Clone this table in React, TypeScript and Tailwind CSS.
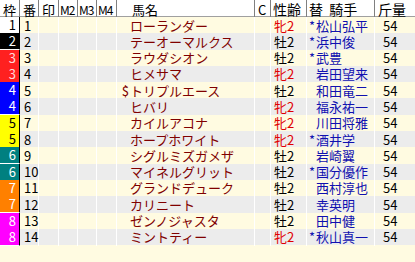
import React from "react";

type Row = { waku: number; uma: number; name: string; dollar?: boolean; sei: string; mark?: boolean; jockey: string; kin: number };

const rows: Row[] = [
  { waku: 1, uma: 1, name: "ローランダー", sei: "牝2", mark: true, jockey: "松山弘平", kin: 54 },
  { waku: 2, uma: 2, name: "テーオーマルクス", sei: "牡2", mark: true, jockey: "浜中俊", kin: 54 },
  { waku: 3, uma: 3, name: "ラウダシオン", sei: "牡2", mark: true, jockey: "武豊", kin: 54 },
  { waku: 3, uma: 4, name: "ヒメサマ", sei: "牝2", jockey: "岩田望来", kin: 54 },
  { waku: 4, uma: 5, name: "トリプルエース", dollar: true, sei: "牡2", jockey: "和田竜二", kin: 54 },
  { waku: 4, uma: 6, name: "ヒバリ", sei: "牝2", jockey: "福永祐一", kin: 54 },
  { waku: 5, uma: 7, name: "カイルアコナ", sei: "牝2", jockey: "川田将雅", kin: 54 },
  { waku: 5, uma: 8, name: "ホープホワイト", sei: "牝2", mark: true, jockey: "酒井学", kin: 54 },
  { waku: 6, uma: 9, name: "シグルミズガメザ", sei: "牡2", jockey: "岩崎翼", kin: 54 },
  { waku: 6, uma: 10, name: "マイネルグリット", sei: "牡2", mark: true, jockey: "国分優作", kin: 54 },
  { waku: 7, uma: 11, name: "グランドデューク", sei: "牡2", jockey: "西村淳也", kin: 54 },
  { waku: 7, uma: 12, name: "カリニート", sei: "牡2", jockey: "幸英明", kin: 54 },
  { waku: 8, uma: 13, name: "ゼンノジャスタ", sei: "牡2", jockey: "田中健", kin: 54 },
  { waku: 8, uma: 14, name: "ミントティー", sei: "牝2", mark: true, jockey: "秋山真一", kin: 54 },
];

const wakuColor: Record<number, string> = {
  1: "bg-white text-black",
  2: "bg-black text-white",
  3: "bg-[#ff2020] text-[#ffd8d8]",
  4: "bg-[#0000ff] text-white",
  5: "bg-[#ffff00] text-black",
  6: "bg-[#008080] text-white",
  7: "bg-[#ff8000] text-white",
  8: "bg-[#ff00ff] text-white",
};

const cols = "grid grid-cols-[20px_19px_20px_19px_19px_20px_138px_16px_36px_68px_40px]";

export default function App() {
  return (
    <div
      className="w-[415px] h-[262px] overflow-hidden bg-[#fffbe1] text-[13px] leading-[16px] text-black"
      style={{ fontFamily: '"Noto Sans CJK JP", "Noto Sans", sans-serif' }}
    >
      {/* header */}
      <div className={`${cols} h-[17px] bg-white border-b border-[#a0a0a0] text-[13px] leading-[19px]`}>
        <div className="pl-[3px] border-r border-[#808080]">枠</div>
        <div className="pl-[3px] border-r border-[#808080]">番</div>
        <div className="pl-[3px] border-r border-[#808080]">印</div>
        {["M2", "M3", "M4"].map((h) => (
          <div key={h} className="pl-[1px] border-r border-[#808080] text-[12px] tracking-[-1px]">
            {h}
          </div>
        ))}
        <div className="pl-[15px] border-r border-[#808080]">馬名</div>
        <div className="pl-[3px] border-r border-[#808080]">C</div>
        <div className="pl-[2px] border-r border-[#808080] text-[14px]">性齢</div>
        <div className="pl-[2px] border-r border-[#808080] text-[14px]">替&nbsp;&nbsp;騎手</div>
        <div className="pl-[3px] text-[14px]">斤量</div>
      </div>

      {rows.map((r, i) => (
        <div key={r.uma} className={`${cols} h-[16.3px] ${i % 2 === 0 ? "bg-[#fffbe1]" : "bg-[#ececec]"}`}>
          <div className={`flex items-center justify-end pr-[3px] border-r border-black border-b border-b-white ${wakuColor[r.waku]}`}>
            {r.waku}
          </div>
          <div className="flex items-center pl-[4px] border-r border-white">{r.uma}</div>
          <div className="border-r border-white" />
          <div className="border-r border-white" />
          <div className="border-r border-white" />
          <div className="border-r border-white" />
          <div className="flex items-center border-r border-white text-[#800000]">
            <span className="w-[13px] text-right pr-[1px]">{r.dollar ? "$" : ""}</span>
            <span>{r.name}</span>
          </div>
          <div className="border-r border-white" />
          <div className={`flex items-center pl-[3px] border-r border-white ${r.sei === "牝2" ? "text-[#e00000]" : "text-black"}`}>
            {r.sei}
          </div>
          <div className="flex items-center border-r border-white text-[#1010b0]">
            <span className="w-[9px] pl-[2px]">{r.mark ? "*" : ""}</span>
            <span>{r.jockey}</span>
          </div>
          <div className="flex items-center pl-[8px]">{r.kin}</div>
        </div>
      ))}
    </div>
  );
}
